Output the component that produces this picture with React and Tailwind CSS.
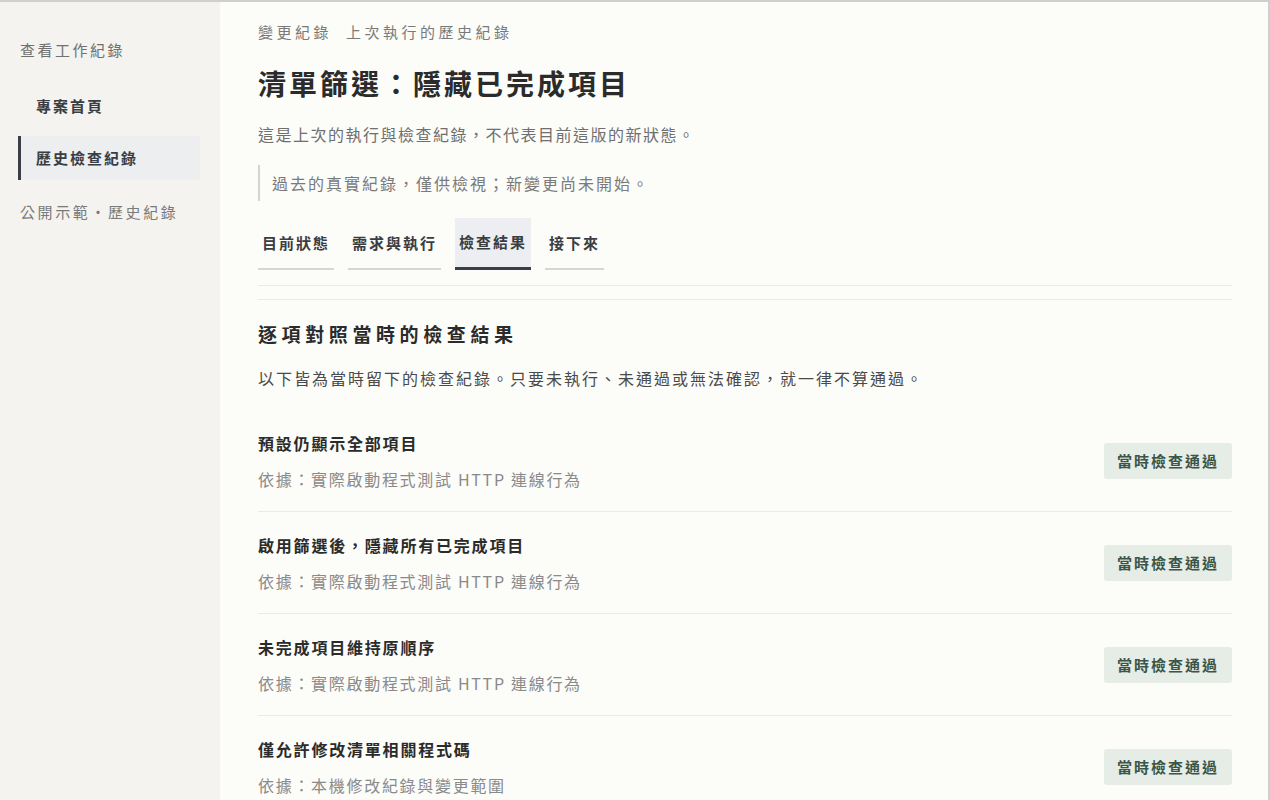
import React from "react";

const rows = [
  { t: "預設仍顯示全部項目", s: "依據：實際啟動程式測試 HTTP 連線行為" },
  { t: "啟用篩選後，隱藏所有已完成項目", s: "依據：實際啟動程式測試 HTTP 連線行為" },
  { t: "未完成項目維持原順序", s: "依據：實際啟動程式測試 HTTP 連線行為" },
  { t: "僅允許修改清單相關程式碼", s: "依據：本機修改紀錄與變更範圍" },
];

const tabs = ["目前狀態", "需求與執行", "檢查結果", "接下來"];

export default function App() {
  return (
    <div
      className="flex h-[800px] w-[1270px] overflow-hidden border-t-2 border-r-2 border-[#cfcfcf] bg-[#fcfcf9]"
      style={{ fontFamily: '"Noto Sans CJK TC", "Noto Sans", sans-serif' }}
    >
      <aside className="w-[220px] shrink-0 bg-[#f4f3ef] pl-[18px] pr-[20px] pt-[36px]">
        <div className="pl-[2px] text-[15px] leading-[24px] tracking-[2.5px] text-[#707070]">查看工作紀錄</div>
        <div className="mt-[22px] flex h-[44px] items-center pl-[18px] text-[15px] font-bold tracking-[2px] text-[#3a3d42]">專案首頁</div>
        <div className="mt-[8px] flex h-[44px] items-center border-l-[3px] border-[#3a3f47] bg-[#eceef0] pl-[15px] text-[15px] font-bold tracking-[2px] text-[#3a3d42]">歷史檢查紀錄</div>
        <div className="mt-[20px] pl-[2px] text-[15px] leading-[24px] tracking-[2.6px] text-[#7a7a7a]">公開示範·歷史紀錄</div>
      </aside>
      <main className="flex-1 pl-[38px] pr-[36px] pt-[18px]">
        <div className="flex gap-[14px] text-[15px] leading-[24px] tracking-[3.5px] text-[#7a7a7a]">
          <span>變更紀錄</span>
          <span>上次執行的歷史紀錄</span>
        </div>
        <h1 className="mt-[19px] text-[28px] font-bold leading-[40px] tracking-[3px] text-[#2b2b2b]">清單篩選：隱藏已完成項目</h1>
        <p className="mt-[19px] text-[16px] leading-[24px] tracking-[1.5px] text-[#6f6f6f]">這是上次的執行與檢查紀錄，不代表目前這版的新狀態。</p>
        <div className="mt-[19px] flex h-[36px] items-center border-l-2 border-[#d4d4d4] pl-[12px] text-[16px] tracking-[2px] text-[#7a7a7a]">過去的真實紀錄，僅供檢視；新變更尚未開始。</div>
        <div className="mt-[17px] flex gap-[14px] border-b border-[#ebebe7] pb-[15px]">
          {tabs.map((t) => (
            <div
              key={t}
              className={
                t === "檢查結果"
                  ? "flex h-[52px] items-center border-b-[3px] border-[#3a3f47] bg-[#eceef1] px-[4px] text-[15px] font-bold tracking-[2px] text-[#3a3d42]"
                  : "flex h-[52px] items-center border-b-2 border-[#d6d6d6] px-[4px] pt-[1px] text-[15px] font-bold tracking-[2px] text-[#3a3d42]"
              }
            >
              {t}
            </div>
          ))}
        </div>
        <div className="mt-[13px] border-t border-[#ebebe7] pt-[21px]">
          <h2 className="text-[19px] font-bold leading-[26px] tracking-[4.6px] text-[#2b2b2b]">逐項對照當時的檢查結果</h2>
          <p className="mt-[19px] text-[16px] leading-[24px] tracking-[2px] text-[#4a4a4a]">以下皆為當時留下的檢查紀錄。只要未執行、未通過或無法確認，就一律不算通過。</p>
          <div className="mt-[20px]">
            {rows.map((r) => (
              <div key={r.t} className="flex items-center justify-between border-b border-[#ebebe7] pt-[21px] pb-[20px]">
                <div>
                  <div className="text-[16px] font-bold leading-[24px] tracking-[1.8px] text-[#2b2b2b]">{r.t}</div>
                  <div className="mt-[12px] text-[16px] leading-[24px] tracking-[1.7px] text-[#8a8a8a]">{r.s}</div>
                </div>
                <div className="flex h-[36px] w-[128px] items-center justify-center rounded-[3px] bg-[#e6ece6] text-[15px] font-bold tracking-[2px] text-[#3b5547]">當時檢查通過</div>
              </div>
            ))}
          </div>
        </div>
      </main>
    </div>
  );
}
